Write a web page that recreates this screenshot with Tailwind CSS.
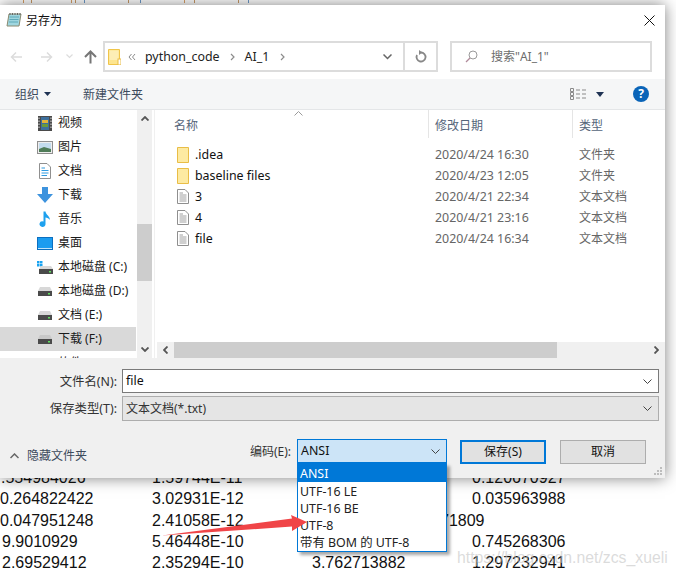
<!DOCTYPE html>
<html lang="zh"><head><meta charset="utf-8">
<script src="https://cdn.jsdelivr.net/npm/@tailwindcss/browser@4"></script>
</head>
<body class="bg-white">
<div class="relative w-[676px] h-[576px] overflow-hidden bg-white text-[12px] leading-[16px] text-[#1a1a1a] font-['Noto_Sans','Noto_Sans_CJK_SC',sans-serif]">
  <!-- top strip: tails of the text behind the dialog -->
  <div class="h-[5px] overflow-hidden bg-white">
    <svg class="block w-[300px] h-[3px]" viewBox="0 0 300 3"><path d="M23 0h1v3h-1zM71 0h1v3h-1zM184 0h1v3h-1z" fill="#d9a066"/><path d="M31 0h1v3h-1zM75 0h1v3h-1zM128 0h1v3h-1zM194 0h1v3h-1zM238 0h1v3h-1z" fill="#c99a66"/><path d="M84 0h1v3h-1zM140 0h1v3h-1zM248 0h1v3h-1z" fill="#6d9ac9"/></svg>
  </div>
  <!-- dialog -->
  <div class="relative z-10 w-[665px] h-[473px] bg-white flex flex-col shadow-[0_0_14px_rgba(0,0,0,0.5)]">
    <!-- title -->
    <div class="h-[30px] flex items-center pl-[6px] pr-[10px] shrink-0">
      <svg class="w-[16px] h-[16px] mr-[4px]" viewBox="0 0 16 16"><path d="M3 2 L15 2 L13 14 L1 14 Z" fill="#9fd6df" stroke="#8a8a70"/><path d="M3.500 5H13M3.500 7.500H12.500M3 10H12" stroke="#5fa9b8"/><path d="M4 1v2M6.500 1v2M9 1v2M11.500 1v2M14 1v2" stroke="#666"/></svg>
      <span class="text-[#111] pt-[2px]">另存为</span>
      <svg class="ml-auto w-[11px] h-[11px]" viewBox="0 0 11 11"><path d="M0.500 0.500L10.500 10.500M10.500 0.500L0.500 10.500" stroke="#111" fill="none"/></svg>
    </div>
    <!-- nav -->
    <div class="h-[44px] flex items-center shrink-0 relative pb-[1px]">
      <svg class="ml-[10px] w-[13px] h-[12px]" viewBox="0 0 13 12"><path d="M12 6H2M6 1.500L1.500 6L6 10.500" stroke="#dcdcdc" stroke-width="1.500" fill="none"/></svg>
      <svg class="ml-[17px] w-[13px] h-[12px]" viewBox="0 0 13 12"><path d="M1 6H11M7 1.500L11.500 6L7 10.500" stroke="#dcdcdc" stroke-width="1.500" fill="none"/></svg>
      <svg class="ml-[13px] w-[7px] h-[5px]" viewBox="0 0 7 5"><path d="M0.500 0.500L3.500 3.500L6.500 0.500" stroke="#dcdcdc" stroke-width="1.200" fill="none"/></svg>
      <svg class="ml-[11px] w-[13px] h-[14px]" viewBox="0 0 13 14"><path d="M6.500 13.500V2M1 7L6.500 1.500L12 7" stroke="#767676" stroke-width="2" fill="none"/></svg>
      <!-- path box -->
      <div class="ml-[6px] w-[335px] h-[31px] border-2 border-[#dcdcdc] flex items-center">
        <svg class="ml-[3px] w-[13px] h-[16px]" viewBox="0 0 13 16"><path d="M0.500 0.500H11.500V15.500H0.500Z" fill="#fde58f" stroke="#f0c54a"/><path d="M1.500 1.500H10.500V11H1.500Z" fill="#fdeeb5"/><rect x="10" y="10" width="3" height="6" fill="#fff" stroke="#e9bd46"/></svg>
        <svg class="ml-[7px] w-[8px] h-[8px]" viewBox="0 0 8 8"><path d="M3.500 1L1 4L3.500 7M7 1L4.500 4L7 7" stroke="#8c8c8c" fill="none"/></svg>
        <span class="ml-[9px] text-[#222] text-[12.400px]">python_code</span>
        <svg class="ml-[10px] w-[5px] h-[8px]" viewBox="0 0 5 8"><path d="M1 1L4 4L1 7" stroke="#8c8c8c" stroke-width="1.200" fill="none"/></svg>
        <span class="ml-[10px] text-[#222] text-[12.400px]">AI_1</span>
        <svg class="ml-[11px] w-[5px] h-[8px]" viewBox="0 0 5 8"><path d="M1 1L4 4L1 7" stroke="#8c8c8c" stroke-width="1.200" fill="none"/></svg>
        <svg class="ml-auto mr-[11px] w-[9px] h-[6px]" viewBox="0 0 9 6"><path d="M0.500 0.500L4.500 4.500L8.500 0.500" stroke="#666" stroke-width="1.500" fill="none"/></svg>
        <div class="w-[33px] h-full border-l-2 border-[#dcdcdc] flex items-center justify-center">
          <svg class="w-[12px] h-[13px]" viewBox="0 0 12 13"><path d="M6 2.500A4.500 4.500 0 1 1 2 5" stroke="#888" stroke-width="1.800" fill="none"/><path d="M4 0L7.500 2.500L4 5" fill="#888"/></svg>
        </div>
      </div>
      <!-- search -->
      <div class="ml-[12px] w-[202px] h-[31px] border-2 border-[#dcdcdc] flex items-center">
        <svg class="ml-[13px] w-[13px] h-[13px]" viewBox="0 0 13 13"><circle cx="8" cy="5" r="4" stroke="#9a9a9a" fill="none"/><path d="M5 8L1 12" stroke="#b08a9a" stroke-width="1.200"/></svg>
        <span class="ml-[13px] text-[#6d6d6d]">搜索"AI_1"</span>
      </div>
    </div>
    <!-- toolbar -->
    <div class="h-[31px] bg-[#f5f6f7] border-b border-[#e4e6e8] flex items-center shrink-0 text-[#3c4a5c]">
      <span class="ml-[15px] pt-[2px]">组织</span>
      <svg class="ml-[5px] w-[7px] h-[4px]" viewBox="0 0 7 4"><path d="M0 0H7L3.500 4Z" fill="#1f3354"/></svg>
      <span class="ml-[32px] pt-[2px]">新建文件夹</span>
      <svg class="ml-auto w-[16px] h-[13px]" viewBox="0 0 16 13"><path d="M0.500 0.500h3v3h-3zM0.500 4.500h3v3h-3zM0.500 8.500h3v3h-3z" fill="none" stroke="#8a8a8a"/><path d="M6 2h4M6 6h4M6 10h4M12 2h4M12 6h4M12 10h4" stroke="#8a8a8a"/></svg>
      <svg class="ml-[10px] w-[8px] h-[5px]" viewBox="0 0 8 5"><path d="M0 0H8L4 5Z" fill="#1f3354"/></svg>
      <div class="ml-[29px] mr-[16px] w-[16px] h-[16px] rounded-full bg-[#0a64b8] text-white font-bold text-[12px] leading-[16px] text-center">?</div>
    </div>
    <!-- main -->
    <div class="h-[248px] flex shrink-0 relative">
      <!-- sidebar -->
      <div class="w-[136px] overflow-hidden shrink-0 pt-[1px]">
        <div class="h-[24px] flex items-center"><svg class="ml-[38px] w-[14px] h-[15px]" viewBox="0 0 14 15"><rect width="14" height="15" fill="#4a4a4a"/><rect x="3" y="1" width="8" height="13" fill="#3d6f9c"/><path d="M4 4h6v3H4z" fill="#e3b43a"/><path d="M4 8h6v3H4z" fill="#6a9a3a"/><path d="M1 1.500v12M13 1.500v12" stroke="#ddd" stroke-dasharray="1.500 1.500"/></svg><span class="ml-[6px]">视频</span></div>
        <div class="h-[24px] flex items-center"><svg class="ml-[37px] w-[16px] h-[13px]" viewBox="0 0 16 13"><rect x="0.500" y="0.500" width="15" height="12" fill="#eee" stroke="#8f8f8f"/><rect x="2" y="2" width="12" height="9" fill="#c3dcee"/><path d="M2 8L7 6L14 8V11H2Z" fill="#4f7c58"/></svg><span class="ml-[5px]">图片</span></div>
        <div class="h-[24px] flex items-center"><svg class="ml-[39px] w-[12px] h-[16px]" viewBox="0 0 12 16"><path d="M0.500 0.500H8L11.500 4V15.500H0.500Z" fill="#fff" stroke="#8f8f8f"/><path d="M2.500 5H6M2.500 7.500H9.500M2.500 10H9.500M2.500 12.500H8" stroke="#2f9be0"/></svg><span class="ml-[7px]">文档</span></div>
        <div class="h-[24px] flex items-center"><svg class="ml-[37px] w-[16px] h-[16px]" viewBox="0 0 16 16"><path d="M5 0H11V7H16L8 16L0 7H5Z" fill="#3d93de"/></svg><span class="ml-[5px]">下载</span></div>
        <div class="h-[24px] flex items-center"><svg class="ml-[39px] w-[12px] h-[16px]" viewBox="0 0 12 16"><path d="M4.500 0.500H6.500C7 4 11 5 11 9C10 7.500 8 6.500 6.500 6.500V13A3 2.800 0 1 1 4.500 10.500Z" fill="#1ea1ee"/></svg><span class="ml-[7px]">音乐</span></div>
        <div class="h-[24px] flex items-center"><svg class="ml-[37px] w-[16px] h-[13px]" viewBox="0 0 16 13"><rect x="0.500" y="0.500" width="15" height="12" fill="#1b9cf0" stroke="#0c6fc0"/><path d="M1 11.500H15" stroke="#bfe4fb"/></svg><span class="ml-[5px]">桌面</span></div>
        <div class="h-[24px] flex items-center"><svg class="ml-[37px] w-[16px] h-[13px]" viewBox="0 0 16 13"><path d="M0 0h2.500v2.500H0zM3 0h2.500v2.500H3zM0 3h2.500v2.500H0zM3 3h2.500v2.500H3z" fill="#19a3f1"/><path d="M2 8L4 5H14L16 8Z" fill="#d8d8d8"/><rect x="2" y="8" width="14" height="5" fill="#4a4a4a"/><rect x="12" y="10" width="2" height="1.500" fill="#5fe05f"/></svg><span class="ml-[5px]">本地磁盘 (C:)</span></div>
        <div class="h-[24px] flex items-center"><svg class="ml-[38px] w-[14px] h-[9px]" viewBox="0 0 14 9"><path d="M0 4L2 0H12L14 4Z" fill="#d8d8d8"/><rect y="4" width="14" height="5" fill="#4a4a4a"/><rect x="10" y="6" width="2" height="1.500" fill="#5fe05f"/></svg><span class="ml-[6px]">本地磁盘 (D:)</span></div>
        <div class="h-[24px] flex items-center"><svg class="ml-[38px] w-[14px] h-[9px]" viewBox="0 0 14 9"><path d="M0 4L2 0H12L14 4Z" fill="#d8d8d8"/><rect y="4" width="14" height="5" fill="#4a4a4a"/><rect x="10" y="6" width="2" height="1.500" fill="#5fe05f"/></svg><span class="ml-[6px]">文档 (E:)</span></div>
        <div class="h-[24px] flex items-center bg-[#d9d9d9]"><svg class="ml-[38px] w-[14px] h-[9px]" viewBox="0 0 14 9"><path d="M0 4L2 0H12L14 4Z" fill="#c8c8c8"/><rect y="4" width="14" height="5" fill="#4a4a4a"/><rect x="10" y="6" width="2" height="1.500" fill="#5fe05f"/></svg><span class="ml-[6px]">下载 (F:)</span></div>
        <div class="h-[24px] flex items-center"><span class="ml-[58px]">软件</span></div>
      </div>
      <!-- vertical scrollbar -->
      <div class="w-[15px] ml-[1px] bg-[#f0f0f0] flex flex-col shrink-0">
        <div class="h-[17px] flex items-center justify-center"><svg class="w-[8px] h-[5px]" viewBox="0 0 8 5"><path d="M0.500 4.500L4 1L7.500 4.500" stroke="#555" stroke-width="1.800" fill="none"/></svg></div>
        <div class="h-[97px]"></div>
        <div class="h-[57px] bg-[#cdcdcd]"></div>
        <div class="flex-1"></div>
        <div class="h-[17px] flex items-center justify-center"><svg class="w-[8px] h-[5px]" viewBox="0 0 8 5"><path d="M0.500 0.500L4 4L7.500 0.500" stroke="#555" stroke-width="1.800" fill="none"/></svg></div>
      </div>
      <!-- content -->
      <div class="w-[513px] ml-[2px] border-l border-[#f0f0f0] flex flex-col relative">
        <div class="h-[28px] flex shrink-0 text-[#55657a]">
          <div class="w-[273px] pl-[19px] flex items-center pt-[3px] relative">名称<svg class="absolute left-[139px] top-[1px] w-[9px] h-[5px]" viewBox="0 0 9 5"><path d="M0.500 4.500L4.500 0.500L8.500 4.500" stroke="#9a9a9a" fill="none"/></svg></div>
          <div class="w-[144px] border-l border-[#e5e5e5] pl-[6px] flex items-center pt-[3px]">修改日期</div>
          <div class="flex-1 border-l border-[#e5e5e5] pl-[6px] flex items-center pt-[3px]">类型</div>
        </div>
        <div class="pt-[6px] flex flex-col">
          <div class="h-[21px] flex items-center"><svg class="ml-[22px] w-[12px] h-[16px]" viewBox="0 0 12 16"><path d="M0.500 0.500H11.500V15.500H0.500Z" fill="#fdeaa2" stroke="#e9bd46"/></svg><span class="ml-[6px] w-[240px] text-[#111] text-[12.400px]">.idea</span><span class="text-[#666] w-[144px] text-[12.400px]">2020/4/24 16:30</span><span class="text-[#666]">文件夹</span></div>
          <div class="h-[21px] flex items-center"><svg class="ml-[22px] w-[12px] h-[16px]" viewBox="0 0 12 16"><path d="M0.500 0.500H11.500V15.500H0.500Z" fill="#fdeaa2" stroke="#e9bd46"/></svg><span class="ml-[6px] w-[240px] text-[#111] text-[12.400px]">baseline files</span><span class="text-[#666] w-[144px] text-[12.400px]">2020/4/23 12:05</span><span class="text-[#666]">文件夹</span></div>
          <div class="h-[21px] flex items-center"><svg class="ml-[22px] w-[12px] h-[15px]" viewBox="0 0 12 15"><path d="M0.500 0.500H8L11.500 4V14.500H0.500Z" fill="#fff" stroke="#8f8f8f"/><path d="M2.500 4H6M2.500 6H9.500M2.500 8H9.500M2.500 10H9.500M2.500 12H9.500" stroke="#a0a0a0"/></svg><span class="ml-[6px] w-[240px] text-[#111] text-[12.400px]">3</span><span class="text-[#666] w-[144px] text-[12.400px]">2020/4/21 22:34</span><span class="text-[#666]">文本文档</span></div>
          <div class="h-[21px] flex items-center"><svg class="ml-[22px] w-[12px] h-[15px]" viewBox="0 0 12 15"><path d="M0.500 0.500H8L11.500 4V14.500H0.500Z" fill="#fff" stroke="#8f8f8f"/><path d="M2.500 4H6M2.500 6H9.500M2.500 8H9.500M2.500 10H9.500M2.500 12H9.500" stroke="#a0a0a0"/></svg><span class="ml-[6px] w-[240px] text-[#111] text-[12.400px]">4</span><span class="text-[#666] w-[144px] text-[12.400px]">2020/4/21 23:16</span><span class="text-[#666]">文本文档</span></div>
          <div class="h-[21px] flex items-center"><svg class="ml-[22px] w-[12px] h-[15px]" viewBox="0 0 12 15"><path d="M0.500 0.500H8L11.500 4V14.500H0.500Z" fill="#fff" stroke="#8f8f8f"/><path d="M2.500 4H6M2.500 6H9.500M2.500 8H9.500M2.500 10H9.500M2.500 12H9.500" stroke="#a0a0a0"/></svg><span class="ml-[6px] w-[240px] text-[#111] text-[12.400px]">file</span><span class="text-[#666] w-[144px] text-[12.400px]">2020/4/24 16:34</span><span class="text-[#666]">文本文档</span></div>
        </div>
        <!-- horizontal scrollbar -->
        <div class="mt-auto ml-[2px] h-[16px] bg-[#f0f0f0] flex shrink-0">
          <div class="w-[17px] flex items-center justify-center"><svg class="w-[5px] h-[8px]" viewBox="0 0 5 8"><path d="M4.500 0.500L1 4L4.500 7.500" stroke="#555" stroke-width="1.800" fill="none"/></svg></div>
          <div class="w-[383px] bg-[#cdcdcd]"></div>
          <div class="flex-1 flex items-center justify-end pr-[6px]"><svg class="w-[5px] h-[8px]" viewBox="0 0 5 8"><path d="M0.500 0.500L4 4L0.500 7.500" stroke="#555" stroke-width="1.800" fill="none"/></svg></div>
        </div>
      </div>
    </div>
    <!-- form -->
    <div class="flex-1 bg-[#f0f0f0] flex flex-col relative">
      <div class="mt-[11px] h-[24px] flex items-center">
        <span class="w-[117px] text-right text-[#333] text-[12.400px] pt-[1px]">文件名(N):</span>
        <div class="ml-[5px] w-[537px] h-[24px] bg-white border border-[#7a7a7a] flex items-center pl-[3px] pr-[6px]"><span class="text-[#111] text-[12.400px]">file</span><svg class="ml-auto w-[9px] h-[5px]" viewBox="0 0 9 5"><path d="M0.500 0.500L4.500 4.500L8.500 0.500" stroke="#444" fill="none"/></svg></div>
      </div>
      <div class="mt-[3px] h-[25px] flex items-center">
        <span class="w-[117px] text-right text-[#333] text-[12.400px] pt-[1px]">保存类型(T):</span>
        <div class="ml-[5px] w-[537px] h-[25px] bg-[#e5e5e5] border border-[#adadad] flex items-center pl-[3px] pr-[6px]"><span class="text-[#333]">文本文档(*.txt)</span><svg class="ml-auto w-[9px] h-[5px]" viewBox="0 0 9 5"><path d="M0.500 0.500L4.500 4.500L8.500 0.500" stroke="#444" fill="none"/></svg></div>
      </div>
      <div class="mt-[18px] h-[24px] flex items-center">
        <svg class="ml-[10px] mt-[9px] w-[9px] h-[6px]" viewBox="0 0 9 6"><path d="M0.500 5L4.500 1L8.500 5" stroke="#666" stroke-width="1.500" fill="none"/></svg>
        <span class="ml-[8px] w-[223px] text-[#3c4a5c] pt-[9px]">隐藏文件夹</span>
        <span class="w-[42px] whitespace-nowrap text-[#333] pt-[2px]">编码(E):</span>
        <div class="ml-[5px] w-[150px] h-[24px] bg-[#cce4f7] border border-[#0078d7] flex items-center pl-[3px] pr-[6px]"><span class="text-[#111] text-[12.400px]">ANSI</span><svg class="ml-auto w-[9px] h-[5px]" viewBox="0 0 9 5"><path d="M0.500 0.500L4.500 4.500L8.500 0.500" stroke="#444" fill="none"/></svg></div>
        <div class="ml-[13px] w-[86px] h-[24px] mt-[1px] bg-[#e1e1e1] border-2 border-[#0078d7] flex items-center justify-center text-[#111]">保存(S)</div>
        <div class="ml-[14px] w-[86px] h-[24px] mt-[1px] bg-[#e1e1e1] border border-[#adadad] flex items-center justify-center text-[#111]">取消</div>
      </div>
      <svg class="absolute right-[3px] bottom-[3px] w-[8px] h-[8px]" viewBox="0 0 8 8"><path d="M6 0h2v2H6zM3 3h2v2H3zM6 3h2v2H6zM0 6h2v2H0zM3 6h2v2H3zM6 6h2v2H6z" fill="#bdbdbd"/></svg>
    </div>
  </div>
  <!-- spreadsheet text below the dialog -->
  <div class="mt-[-11px] text-[16px] leading-[21.330px] text-[#111] font-['Liberation_Sans',sans-serif]">
    <div class="h-[21.330px] flex whitespace-nowrap"><span class="w-[152px] pl-[1px]">.554984026</span><span class="w-[320px]">1.59744E-11</span><span>0.120670927</span></div>
    <div class="h-[21.330px] flex whitespace-nowrap"><span class="w-[152px]">0.264822422</span><span class="w-[320px]">3.02931E-12</span><span>0.035963988</span></div>
    <div class="h-[21.330px] flex whitespace-nowrap"><span class="w-[152px]">0.047951248</span><span class="w-[288px]">2.41058E-12</span><span>71809</span></div>
    <div class="h-[21.330px] flex whitespace-nowrap"><span class="w-[152px] pl-[2px]">9.9010929</span><span class="w-[320px]">5.46448E-10</span><span>0.745268306</span></div>
    <div class="h-[21.330px] flex whitespace-nowrap"><span class="w-[152px] pl-[2px]">2.69529412</span><span class="w-[160px]">2.35294E-10</span><span class="w-[160px]">3.762713882</span><span>1.297232941</span></div>
  </div>
  <!-- red annotation arrow -->
  <svg class="absolute left-[160px] top-[510px] w-[150px] h-[30px] z-20" viewBox="0 0 150 30"><path d="M2 25.500L132 8.500L131 5L147 12L132 21L132 16.500Z" fill="#f04548"/></svg>
  <!-- encoding dropdown -->
  <div class="absolute z-[15] left-[297px] top-[463px] w-[150px] h-[89px] bg-white border border-[#0078d7] shadow-[3px_3px_3px_rgba(0,0,0,0.35)] text-[#222] text-[12.400px] flex flex-col">
    <div class="h-[18px] bg-[#0078d7] text-white pl-[2px] pt-[2px] flex items-center">ANSI</div>
    <div class="h-[17px] pl-[2px] pt-[2px] flex items-center">UTF-16 LE</div>
    <div class="h-[17px] pl-[2px] pt-[2px] flex items-center">UTF-16 BE</div>
    <div class="h-[17px] pl-[2px] pt-[2px] flex items-center">UTF-8</div>
    <div class="h-[17px] pl-[2px] pt-[2px] flex items-center">带有 BOM 的 UTF-8</div>
  </div>
  <!-- watermark -->
  <div class="absolute z-30 left-[457px] top-[548px] text-[15.800px] leading-[20px] text-[#c4c4c4]/60 font-['Liberation_Sans',sans-serif] whitespace-nowrap">https://blog.csdn.net/zcs_xueli</div>
</div>
</body></html>
